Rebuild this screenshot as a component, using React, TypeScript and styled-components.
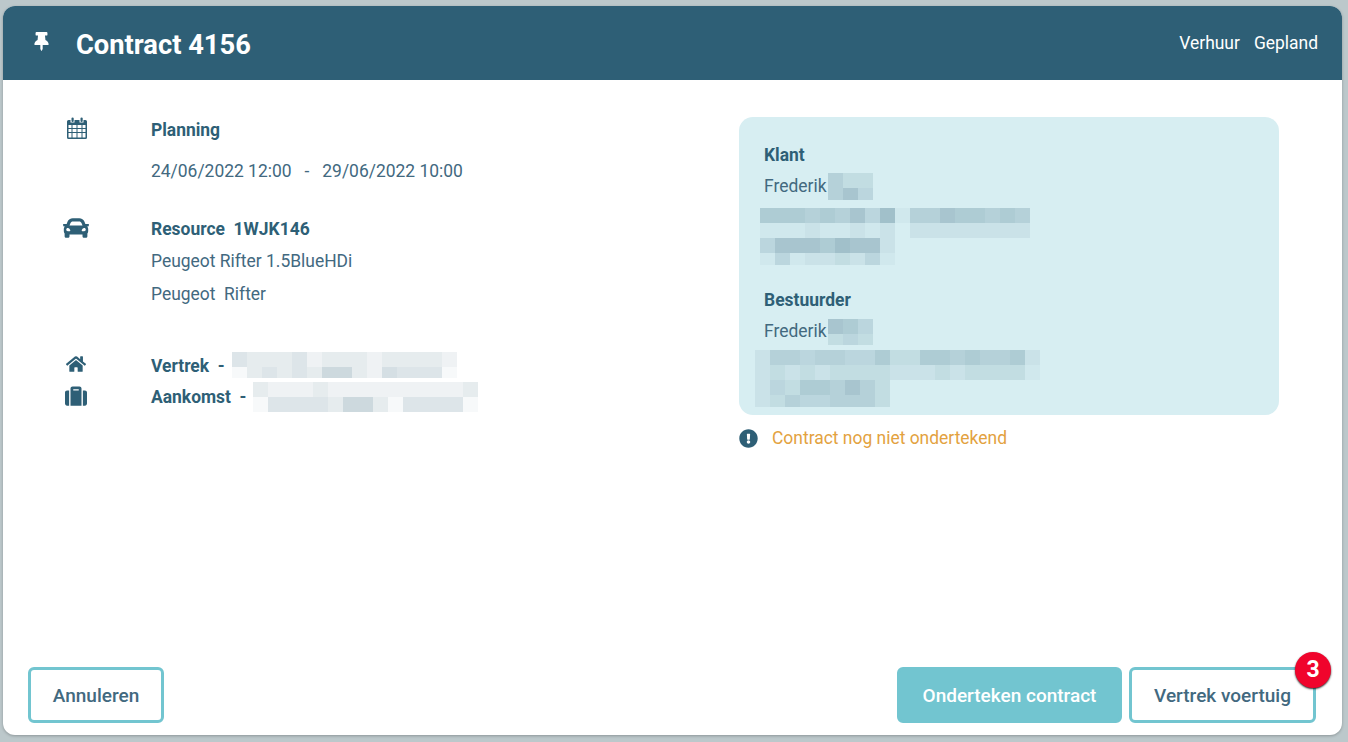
import React from "react";
import styled, { createGlobalStyle } from "styled-components";
import { FaCar, FaExclamationCircle, FaHome, FaSuitcase, FaThumbtack } from "react-icons/fa";

const Global = createGlobalStyle`
  html, body { margin: 0; padding: 0; height: 100%; }
  body { background: #bcc8cb; font-family: Roboto, "Liberation Sans", sans-serif; overflow: hidden; }
  #root { height: 100%; }
`;

const Page = styled.div`
  box-sizing: border-box;
  height: 742px;
  padding: 6px 6px 7px 3px;
  display: flex;
`;
const Modal = styled.div`
  flex: 1;
  display: flex;
  flex-direction: column;
  background: #fff;
  border-radius: 12px;
  box-shadow: 0 1px 3px rgba(0, 0, 0, 0.25);
`;
const Header = styled.header`
  height: 74px;
  flex: none;
  background: #2e5f76;
  border-radius: 12px 12px 0 0;
  color: #fff;
  display: flex;
  align-items: center;
  padding: 0 24px 0 29px;
  box-sizing: border-box;
`;
const PinSlot = styled.span`
  width: 44px;
  display: flex;
  font-size: 19px;
  margin-top: -3px;
`;
const Title = styled.h1`
  margin: 3px 0 0;
  font-size: 27.3px;
  font-weight: 700;
  flex: 1;
`;
const Tag = styled.span`
  font-size: 17.45px;
  margin-left: 14px;
`;
const Body = styled.main`
  flex: 1;
  display: flex;
  padding: 34px 0 0 53px;
`;
const LeftCol = styled.section`
  width: 683px;
  flex: none;
  display: flex;
  flex-direction: column;
`;
const Row = styled.div<{ $mt?: number }>`
  display: flex;
  margin-top: ${(p) => p.$mt ?? 0}px;
`;
const IconSlot = styled.div<{ $size: number; $top: number }>`
  width: 40px;
  flex: none;
  margin-right: 55px;
  display: flex;
  justify-content: center;
  align-items: flex-start;
  color: #2e5f76;
  font-size: ${(p) => p.$size}px;
  padding-top: ${(p) => p.$top}px;
`;
const Lines = styled.div`
  display: flex;
  flex-direction: column;
`;
const Strong = styled.div<{ $h?: number }>`
  font-size: 17.45px;
  font-weight: 700;
  color: #2e5f76;
  line-height: ${(p) => p.$h ?? 32}px;
  white-space: pre;
`;
const Plain = styled.div<{ $mt?: number; $h?: number }>`
  font-size: 17.45px;
  color: #42697f;
  line-height: ${(p) => p.$h ?? 32}px;
  margin-top: ${(p) => p.$mt ?? 0}px;
  white-space: pre;
`;
const InlineLine = styled.div`
  display: flex;
  align-items: flex-start;
  height: 31px;
`;
const MaskSlot = styled.div<{ $ml: number; $mt: number }>`
  margin-left: ${(p) => p.$ml}px;
  margin-top: ${(p) => p.$mt}px;
  display: flex;
  flex: none;
`;
const RightCol = styled.section`
  width: 540px;
  flex: none;
  padding-top: 3px;
`;
const Panel = styled.div`
  background: #d7eef2;
  border-radius: 14px;
  padding: 22px 0 8px 25px;
`;
const NameLine = styled.div`
  display: flex;
  align-items: center;
  height: 30px;
`;
const Warning = styled.div`
  display: flex;
  align-items: center;
  height: 32px;
  margin-top: 7px;
  color: #e3a23f;
  font-size: 17.45px;
`;
const WarningIcon = styled.span`
  color: #2e5f76;
  font-size: 19px;
  width: 33px;
  display: flex;
`;
const Footer = styled.footer`
  flex: none;
  display: flex;
  align-items: center;
  padding: 0 26px 12px 25px;
  gap: 7px;
`;
const Spacer = styled.div`
  flex: 1;
`;
const Button = styled.button<{ $filled?: boolean; $w: number }>`
  position: relative;
  box-sizing: border-box;
  width: ${(p) => p.$w}px;
  height: 56px;
  border: 3px solid #72c5d0;
  border-radius: 6px;
  background: ${(p) => (p.$filled ? "#72c5d0" : "#fff")};
  color: ${(p) => (p.$filled ? "#fff" : "#42697f")};
  font-family: Roboto, "Liberation Sans", sans-serif;
  font-size: 19px;
  font-weight: 500;
  padding: 0;
`;
const Badge = styled.span`
  position: absolute;
  top: -18px;
  right: -18px;
  width: 36px;
  height: 36px;
  border-radius: 50%;
  background: #f0042c;
  color: #fff;
  font-size: 23px;
  font-weight: 700;
  line-height: 36px;
  text-align: center;
  box-shadow: 0 1px 2px rgba(0, 0, 0, 0.85);
`;

function Mosaic({ rows, heights, tint = "46,95,118" }: { rows: string[]; heights: number[]; tint?: string }) {
  const cols = rows[0].length;
  const total = heights.reduce((a, b) => a + b, 0);
  let y = 0;
  return (
    <svg width={cols * 15} height={total} shapeRendering="crispEdges" aria-hidden="true">
      {rows.map((row, r) => {
        const top = y;
        y += heights[r];
        return row.split("").map((d, c) => (
          <rect key={`${r}-${c}`} x={c * 15} y={top} width={15} height={heights[r]} fill={`rgba(${tint},${Number(d) * 0.04})`} />
        ));
      })}
    </svg>
  );
}

function CalendarIcon() {
  return (
    <svg width="22" height="22" viewBox="-2 0 22 22" fill="#2e5f76" aria-hidden="true">
      <path fillRule="evenodd" d="M1.500 3H3.500v2.500h4V3h5v2.500h4V3h2A1.500 1.500 0 0 1 20 4.500V20.500A1.500 1.500 0 0 1 18.500 22H1.500A1.500 1.500 0 0 1 0 20.500V4.500A1.500 1.500 0 0 1 1.500 3ZM1.500 8v3h3V8Zm4 0v3h4V8Zm5 0v3h4V8Zm5 0v3h3V8ZM1.500 12v3h3v-3Zm4 0v3h4v-3Zm5 0v3h4v-3Zm5 0v3h3v-3ZM1.500 16v4.500h3V16Zm4 0v4.500h4V16Zm5 0v4.500h4V16Zm5 0v4.500h3V16Z" />
      <rect x="4.500" y="0.500" width="2.200" height="4.500" rx="1.100" />
      <rect x="13.500" y="0.500" width="2.200" height="4.500" rx="1.100" />
    </svg>
  );
}

export default function App() {
  return (
    <Page>
      <Global />
      <Modal>
        <Header>
          <PinSlot><FaThumbtack /></PinSlot>
          <Title>Contract 4156</Title>
          <Tag>Verhuur</Tag>
          <Tag>Gepland</Tag>
        </Header>
        <Body>
          <LeftCol>
            <Row>
              <IconSlot $size={22} $top={3}><CalendarIcon /></IconSlot>
              <Lines>
                <Strong>Planning</Strong>
                <Plain $mt={9}>24/06/2022 12:00   -   29/06/2022 10:00</Plain>
              </Lines>
            </Row>
            <Row $mt={26}>
              <IconSlot $size={26} $top={2}><FaCar /></IconSlot>
              <Lines>
                <Strong>Resource  1WJK146</Strong>
                <Plain $h={33}>Peugeot Rifter 1.5BlueHDi</Plain>
                <Plain>Peugeot  Rifter</Plain>
              </Lines>
            </Row>
            <Row $mt={41}>
              <IconSlot $size={20} $top={3}><FaHome /></IconSlot>
              <InlineLine>
                <Strong $h={31}>Vertrek  -</Strong>
                <MaskSlot $ml={7} $mt={1}>
                  <Mosaic rows={["433342333233332", "134343663254441"]} heights={[15, 11]} />
                </MaskSlot>
              </InlineLine>
            </Row>
            <Row>
              <IconSlot $size={22} $top={3}><FaSuitcase /></IconSlot>
              <InlineLine>
                <Strong $h={31}>Aankomst  -</Strong>
                <MaskSlot $ml={7} $mt={0}>
                  <Mosaic rows={["322232222222223", "144443663144441"]} heights={[15, 15]} />
                </MaskSlot>
              </InlineLine>
            </Row>
          </LeftCol>
          <RightCol>
            <Panel>
              <Strong>Klant</Strong>
              <NameLine>
                <Plain $h={30}>Frederik</Plain>
                <MaskSlot $ml={2} $mt={0}>
                  <Mosaic rows={["533", "574"]} heights={[15, 12]} />
                </MaskSlot>
              </NameLine>
              <MaskSlot $ml={-4} $mt={7}>
                <Mosaic rows={["666565748155766565", "111211212022222222"]} heights={[15, 15]} />
              </MaskSlot>
              <MaskSlot $ml={-4} $mt={0}>
                <Mosaic rows={["477768772", "141223241"]} heights={[15, 12]} />
              </MaskSlot>
              <MaskSlot $ml={0} $mt={19}>
                <Strong>Bestuurder</Strong>
              </MaskSlot>
              <NameLine>
                <Plain $h={30}>Frederik</Plain>
                <MaskSlot $ml={2} $mt={2}>
                  <Mosaic rows={["764", "343"]} heights={[15, 11]} />
                </MaskSlot>
              </NameLine>
              <MaskSlot $ml={-9} $mt={4}>
                <Mosaic rows={["2554554463366565562", "2323233332223233331"]} heights={[15, 15]} />
              </MaskSlot>
              <MaskSlot $ml={-9} $mt={0}>
                <Mosaic rows={["243665753", "235445553"]} heights={[15, 12]} />
              </MaskSlot>
            </Panel>
            <Warning>
              <WarningIcon><FaExclamationCircle /></WarningIcon>
              Contract nog niet ondertekend
            </Warning>
          </RightCol>
        </Body>
        <Footer>
          <Button $w={136}>Annuleren</Button>
          <Spacer />
          <Button $w={225} $filled>Onderteken contract</Button>
          <Button $w={187}>Vertrek voertuig<Badge>3</Badge></Button>
        </Footer>
      </Modal>
    </Page>
  );
}
